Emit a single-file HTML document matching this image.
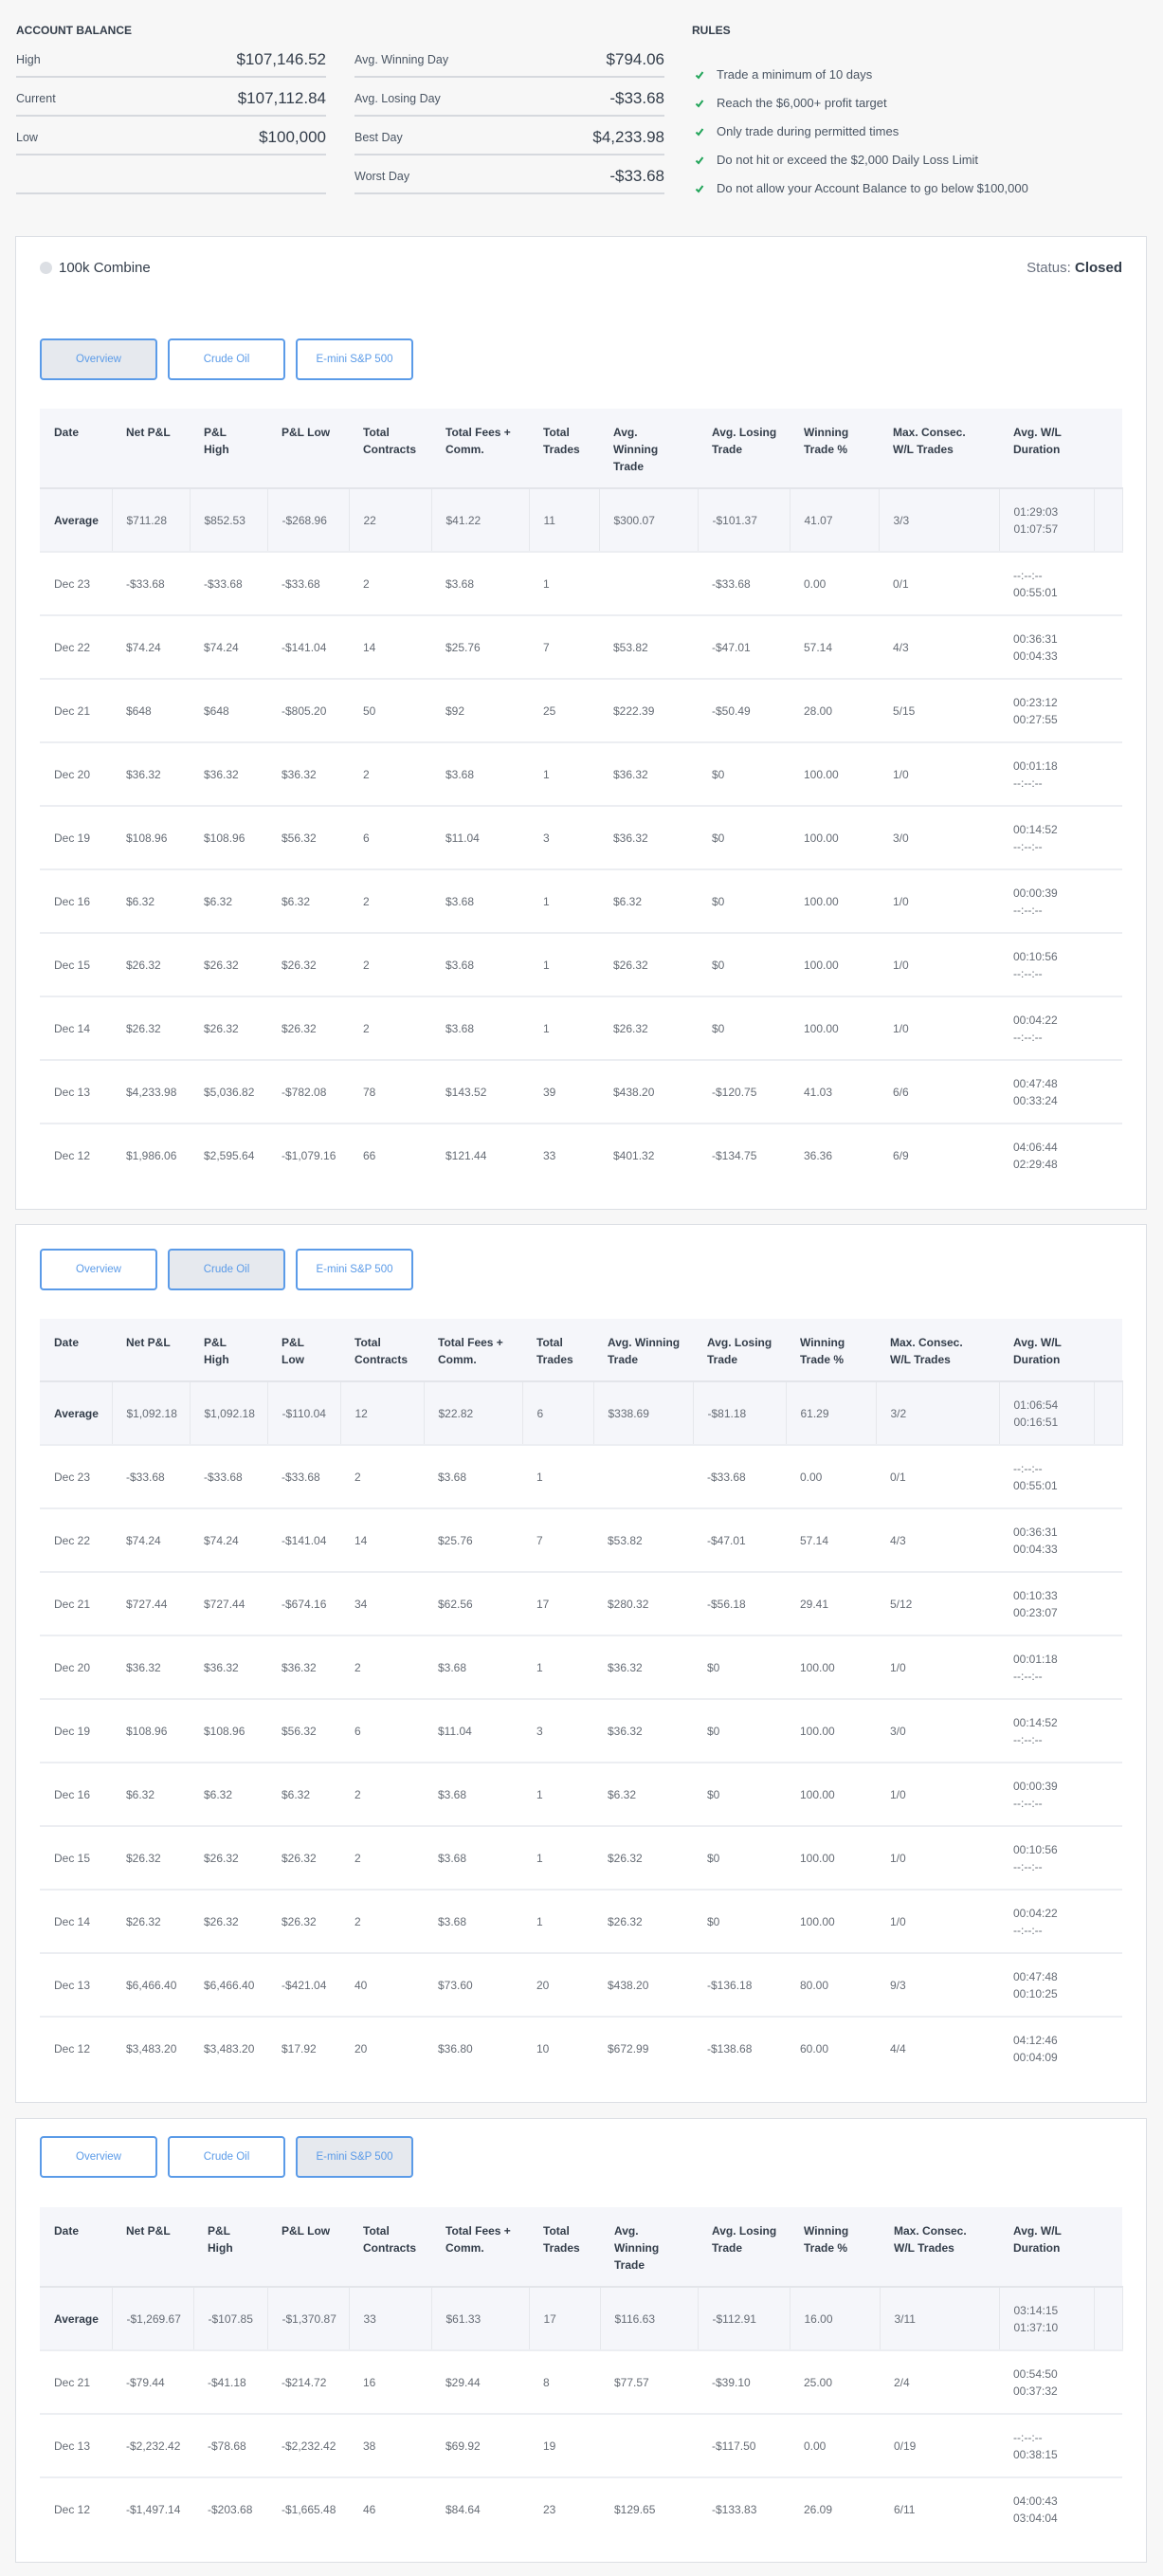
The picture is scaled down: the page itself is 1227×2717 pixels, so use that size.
<!DOCTYPE html>
<html><head><meta charset="utf-8">
<style>
*{box-sizing:border-box;margin:0;padding:0}
body{width:1227px;height:2717px;background:#f7f7f7;font-family:"Liberation Sans",Arial,sans-serif;position:relative;overflow:hidden;color:#333d4a}
.abs{position:absolute}
.h{font-size:12px;font-weight:bold;color:#333d4a}
.row{position:absolute;height:41px;border-bottom:2px solid #d6d9de;width:327px}
.row .l{position:absolute;left:0;top:15px;font-size:12.5px;color:#4a5563}
.row .v{position:absolute;right:0;top:12px;font-size:17px;color:#333d4a}
.rule{position:absolute;left:733px;font-size:13px;color:#4a5563}
.rule svg{position:absolute;left:0;top:3px}
.rule span{position:absolute;left:23px;top:0;white-space:nowrap}
.card{position:absolute;left:16px;width:1194px;background:#fff;border:1px solid #dcdfe4}
.btn{position:absolute;width:124px;height:44px;border:2px solid #5b9be8;border-radius:4px;background:#fff;color:#5b9be8;font-size:11.5px;text-align:center;line-height:40px}
.btn.on{background:#e6e9ee}
table{position:absolute;left:25px;border-collapse:collapse;table-layout:fixed;width:1142px;font-size:12px}
th{background:#f5f6fa;text-align:left;vertical-align:top;font-weight:bold;color:#333d4a;padding:16px 0 0 15px;line-height:18px;white-space:nowrap;border-bottom:2px solid #e3e5ea}
td{height:67px;padding-left:15px;color:#666c75;white-space:nowrap;line-height:18px;border-bottom:2px solid #eceef2;vertical-align:middle}
tr.avg td{background:#f5f6fa;border-right:1px solid #e6e8ec}
tr.avg td:first-child{font-weight:bold;color:#333d4a}
tr:last-child td{border-bottom:none}
</style></head><body>

<div class="abs h" style="left:17px;top:25px">ACCOUNT BALANCE</div>
<div class="abs h" style="left:730px;top:25px">RULES</div>

<div class="row" style="left:17px;top:41px"><span class="l">High</span><span class="v">$107,146.52</span></div>
<div class="row" style="left:17px;top:82px"><span class="l">Current</span><span class="v">$107,112.84</span></div>
<div class="row" style="left:17px;top:123px"><span class="l">Low</span><span class="v">$100,000</span></div>
<div class="row" style="left:17px;top:164px"></div>

<div class="row" style="left:374px;top:41px"><span class="l">Avg. Winning Day</span><span class="v">$794.06</span></div>
<div class="row" style="left:374px;top:82px"><span class="l">Avg. Losing Day</span><span class="v">-$33.68</span></div>
<div class="row" style="left:374px;top:123px"><span class="l">Best Day</span><span class="v">$4,233.98</span></div>
<div class="row" style="left:374px;top:164px"><span class="l">Worst Day</span><span class="v">-$33.68</span></div>

<div class="rule" style="top:71px"><svg width="10" height="10" viewBox="0 0 10 10"><path d="M1.5 5.5 L4 8 L8.5 2" stroke="#22a55a" stroke-width="2" fill="none"/></svg><span>Trade a minimum of 10 days</span></div>
<div class="rule" style="top:101px"><svg width="10" height="10" viewBox="0 0 10 10"><path d="M1.5 5.5 L4 8 L8.5 2" stroke="#22a55a" stroke-width="2" fill="none"/></svg><span>Reach the $6,000+ profit target</span></div>
<div class="rule" style="top:131px"><svg width="10" height="10" viewBox="0 0 10 10"><path d="M1.5 5.5 L4 8 L8.5 2" stroke="#22a55a" stroke-width="2" fill="none"/></svg><span>Only trade during permitted times</span></div>
<div class="rule" style="top:161px"><svg width="10" height="10" viewBox="0 0 10 10"><path d="M1.5 5.5 L4 8 L8.5 2" stroke="#22a55a" stroke-width="2" fill="none"/></svg><span>Do not hit or exceed the $2,000 Daily Loss Limit</span></div>
<div class="rule" style="top:191px"><svg width="10" height="10" viewBox="0 0 10 10"><path d="M1.5 5.5 L4 8 L8.5 2" stroke="#22a55a" stroke-width="2" fill="none"/></svg><span>Do not allow your Account Balance to go below $100,000</span></div>

<!-- Card 1 -->
<div class="card" style="top:249px;height:1027px">
  <div class="abs" style="left:25px;top:26px;width:13px;height:13px;border-radius:50%;background:#dcdfe4"></div>
  <div class="abs" style="left:45px;top:24px;font-size:15px;color:#333d4a">100k Combine</div>
  <div class="abs" style="right:25px;top:24px;font-size:15px;color:#6b7280">Status: <b style="color:#333d4a">Closed</b></div>
  <div class="btn on" style="left:25px;top:107px">Overview</div>
  <div class="btn" style="left:160px;top:107px">Crude Oil</div>
  <div class="btn" style="left:295px;top:107px">E-mini S&amp;P 500</div>
  <table style="top:181px">
  <colgroup><col style="width:76px"><col style="width:82px"><col style="width:82px"><col style="width:86px"><col style="width:87px"><col style="width:103px"><col style="width:74px"><col style="width:104px"><col style="width:97px"><col style="width:94px"><col style="width:127px"><col style="width:100px"><col style="width:30px"></colgroup>
  <tr style="height:84px"><th>Date</th><th>Net P&amp;L</th><th>P&amp;L<br>High</th><th>P&amp;L Low</th><th>Total<br>Contracts</th><th>Total Fees +<br>Comm.</th><th>Total<br>Trades</th><th>Avg.<br>Winning<br>Trade</th><th>Avg. Losing<br>Trade</th><th>Winning<br>Trade %</th><th>Max. Consec.<br>W/L Trades</th><th>Avg. W/L<br>Duration</th><th></th></tr>
  <tr class="avg"><td>Average</td><td>$711.28</td><td>$852.53</td><td>-$268.96</td><td>22</td><td>$41.22</td><td>11</td><td>$300.07</td><td>-$101.37</td><td>41.07</td><td>3/3</td><td>01:29:03<br>01:07:57</td><td></td></tr>
  <tr><td>Dec 23</td><td>-$33.68</td><td>-$33.68</td><td>-$33.68</td><td>2</td><td>$3.68</td><td>1</td><td></td><td>-$33.68</td><td>0.00</td><td>0/1</td><td>--:--:--<br>00:55:01</td><td></td></tr>
  <tr><td>Dec 22</td><td>$74.24</td><td>$74.24</td><td>-$141.04</td><td>14</td><td>$25.76</td><td>7</td><td>$53.82</td><td>-$47.01</td><td>57.14</td><td>4/3</td><td>00:36:31<br>00:04:33</td><td></td></tr>
  <tr><td>Dec 21</td><td>$648</td><td>$648</td><td>-$805.20</td><td>50</td><td>$92</td><td>25</td><td>$222.39</td><td>-$50.49</td><td>28.00</td><td>5/15</td><td>00:23:12<br>00:27:55</td><td></td></tr>
  <tr><td>Dec 20</td><td>$36.32</td><td>$36.32</td><td>$36.32</td><td>2</td><td>$3.68</td><td>1</td><td>$36.32</td><td>$0</td><td>100.00</td><td>1/0</td><td>00:01:18<br>--:--:--</td><td></td></tr>
  <tr><td>Dec 19</td><td>$108.96</td><td>$108.96</td><td>$56.32</td><td>6</td><td>$11.04</td><td>3</td><td>$36.32</td><td>$0</td><td>100.00</td><td>3/0</td><td>00:14:52<br>--:--:--</td><td></td></tr>
  <tr><td>Dec 16</td><td>$6.32</td><td>$6.32</td><td>$6.32</td><td>2</td><td>$3.68</td><td>1</td><td>$6.32</td><td>$0</td><td>100.00</td><td>1/0</td><td>00:00:39<br>--:--:--</td><td></td></tr>
  <tr><td>Dec 15</td><td>$26.32</td><td>$26.32</td><td>$26.32</td><td>2</td><td>$3.68</td><td>1</td><td>$26.32</td><td>$0</td><td>100.00</td><td>1/0</td><td>00:10:56<br>--:--:--</td><td></td></tr>
  <tr><td>Dec 14</td><td>$26.32</td><td>$26.32</td><td>$26.32</td><td>2</td><td>$3.68</td><td>1</td><td>$26.32</td><td>$0</td><td>100.00</td><td>1/0</td><td>00:04:22<br>--:--:--</td><td></td></tr>
  <tr><td>Dec 13</td><td>$4,233.98</td><td>$5,036.82</td><td>-$782.08</td><td>78</td><td>$143.52</td><td>39</td><td>$438.20</td><td>-$120.75</td><td>41.03</td><td>6/6</td><td>00:47:48<br>00:33:24</td><td></td></tr>
  <tr><td>Dec 12</td><td>$1,986.06</td><td>$2,595.64</td><td>-$1,079.16</td><td>66</td><td>$121.44</td><td>33</td><td>$401.32</td><td>-$134.75</td><td>36.36</td><td>6/9</td><td>04:06:44<br>02:29:48</td><td></td></tr>
  </table>
</div>

<!-- Card 2 -->
<div class="card" style="top:1291px;height:927px">
  <div class="btn" style="left:25px;top:25px">Overview</div>
  <div class="btn on" style="left:160px;top:25px">Crude Oil</div>
  <div class="btn" style="left:295px;top:25px">E-mini S&amp;P 500</div>
  <table style="top:99px">
  <colgroup><col style="width:76px"><col style="width:82px"><col style="width:82px"><col style="width:77px"><col style="width:88px"><col style="width:104px"><col style="width:75px"><col style="width:105px"><col style="width:98px"><col style="width:95px"><col style="width:130px"><col style="width:100px"><col style="width:30px"></colgroup>
  <tr style="height:66px"><th>Date</th><th>Net P&amp;L</th><th>P&amp;L<br>High</th><th>P&amp;L<br>Low</th><th>Total<br>Contracts</th><th>Total Fees +<br>Comm.</th><th>Total<br>Trades</th><th>Avg. Winning<br>Trade</th><th>Avg. Losing<br>Trade</th><th>Winning<br>Trade %</th><th>Max. Consec.<br>W/L Trades</th><th>Avg. W/L<br>Duration</th><th></th></tr>
  <tr class="avg"><td>Average</td><td>$1,092.18</td><td>$1,092.18</td><td>-$110.04</td><td>12</td><td>$22.82</td><td>6</td><td>$338.69</td><td>-$81.18</td><td>61.29</td><td>3/2</td><td>01:06:54<br>00:16:51</td><td></td></tr>
  <tr><td>Dec 23</td><td>-$33.68</td><td>-$33.68</td><td>-$33.68</td><td>2</td><td>$3.68</td><td>1</td><td></td><td>-$33.68</td><td>0.00</td><td>0/1</td><td>--:--:--<br>00:55:01</td><td></td></tr>
  <tr><td>Dec 22</td><td>$74.24</td><td>$74.24</td><td>-$141.04</td><td>14</td><td>$25.76</td><td>7</td><td>$53.82</td><td>-$47.01</td><td>57.14</td><td>4/3</td><td>00:36:31<br>00:04:33</td><td></td></tr>
  <tr><td>Dec 21</td><td>$727.44</td><td>$727.44</td><td>-$674.16</td><td>34</td><td>$62.56</td><td>17</td><td>$280.32</td><td>-$56.18</td><td>29.41</td><td>5/12</td><td>00:10:33<br>00:23:07</td><td></td></tr>
  <tr><td>Dec 20</td><td>$36.32</td><td>$36.32</td><td>$36.32</td><td>2</td><td>$3.68</td><td>1</td><td>$36.32</td><td>$0</td><td>100.00</td><td>1/0</td><td>00:01:18<br>--:--:--</td><td></td></tr>
  <tr><td>Dec 19</td><td>$108.96</td><td>$108.96</td><td>$56.32</td><td>6</td><td>$11.04</td><td>3</td><td>$36.32</td><td>$0</td><td>100.00</td><td>3/0</td><td>00:14:52<br>--:--:--</td><td></td></tr>
  <tr><td>Dec 16</td><td>$6.32</td><td>$6.32</td><td>$6.32</td><td>2</td><td>$3.68</td><td>1</td><td>$6.32</td><td>$0</td><td>100.00</td><td>1/0</td><td>00:00:39<br>--:--:--</td><td></td></tr>
  <tr><td>Dec 15</td><td>$26.32</td><td>$26.32</td><td>$26.32</td><td>2</td><td>$3.68</td><td>1</td><td>$26.32</td><td>$0</td><td>100.00</td><td>1/0</td><td>00:10:56<br>--:--:--</td><td></td></tr>
  <tr><td>Dec 14</td><td>$26.32</td><td>$26.32</td><td>$26.32</td><td>2</td><td>$3.68</td><td>1</td><td>$26.32</td><td>$0</td><td>100.00</td><td>1/0</td><td>00:04:22<br>--:--:--</td><td></td></tr>
  <tr><td>Dec 13</td><td>$6,466.40</td><td>$6,466.40</td><td>-$421.04</td><td>40</td><td>$73.60</td><td>20</td><td>$438.20</td><td>-$136.18</td><td>80.00</td><td>9/3</td><td>00:47:48<br>00:10:25</td><td></td></tr>
  <tr><td>Dec 12</td><td>$3,483.20</td><td>$3,483.20</td><td>$17.92</td><td>20</td><td>$36.80</td><td>10</td><td>$672.99</td><td>-$138.68</td><td>60.00</td><td>4/4</td><td>04:12:46<br>00:04:09</td><td></td></tr>
  </table>
</div>

<!-- Card 3 -->
<div class="card" style="top:2234px;height:469px">
  <div class="btn" style="left:25px;top:18px">Overview</div>
  <div class="btn" style="left:160px;top:18px">Crude Oil</div>
  <div class="btn on" style="left:295px;top:18px">E-mini S&amp;P 500</div>
  <table style="top:93px">
  <colgroup><col style="width:76px"><col style="width:86px"><col style="width:78px"><col style="width:86px"><col style="width:87px"><col style="width:103px"><col style="width:75px"><col style="width:103px"><col style="width:97px"><col style="width:95px"><col style="width:126px"><col style="width:100px"><col style="width:30px"></colgroup>
  <tr style="height:84px"><th>Date</th><th>Net P&amp;L</th><th>P&amp;L<br>High</th><th>P&amp;L Low</th><th>Total<br>Contracts</th><th>Total Fees +<br>Comm.</th><th>Total<br>Trades</th><th>Avg.<br>Winning<br>Trade</th><th>Avg. Losing<br>Trade</th><th>Winning<br>Trade %</th><th>Max. Consec.<br>W/L Trades</th><th>Avg. W/L<br>Duration</th><th></th></tr>
  <tr class="avg"><td>Average</td><td>-$1,269.67</td><td>-$107.85</td><td>-$1,370.87</td><td>33</td><td>$61.33</td><td>17</td><td>$116.63</td><td>-$112.91</td><td>16.00</td><td>3/11</td><td>03:14:15<br>01:37:10</td><td></td></tr>
  <tr><td>Dec 21</td><td>-$79.44</td><td>-$41.18</td><td>-$214.72</td><td>16</td><td>$29.44</td><td>8</td><td>$77.57</td><td>-$39.10</td><td>25.00</td><td>2/4</td><td>00:54:50<br>00:37:32</td><td></td></tr>
  <tr><td>Dec 13</td><td>-$2,232.42</td><td>-$78.68</td><td>-$2,232.42</td><td>38</td><td>$69.92</td><td>19</td><td></td><td>-$117.50</td><td>0.00</td><td>0/19</td><td>--:--:--<br>00:38:15</td><td></td></tr>
  <tr><td>Dec 12</td><td>-$1,497.14</td><td>-$203.68</td><td>-$1,665.48</td><td>46</td><td>$84.64</td><td>23</td><td>$129.65</td><td>-$133.83</td><td>26.09</td><td>6/11</td><td>04:00:43<br>03:04:04</td><td></td></tr>
  </table>
</div>

</body></html>
